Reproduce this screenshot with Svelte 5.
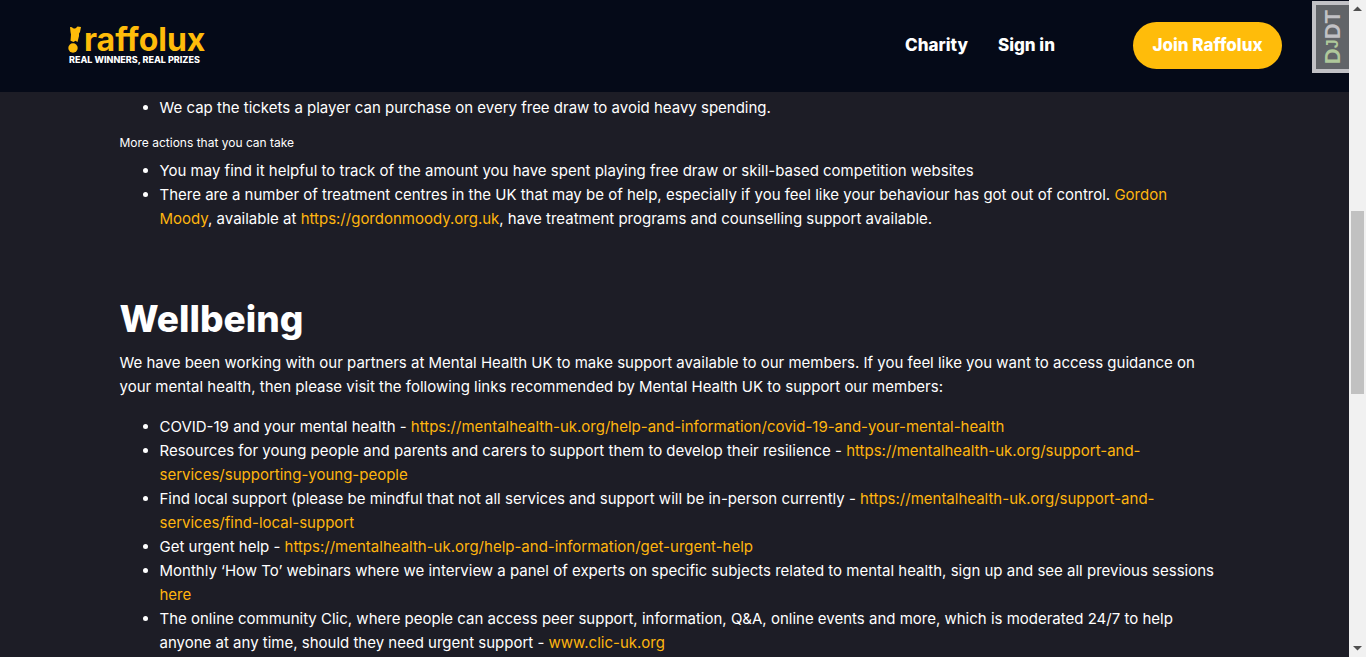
<script>
  const support = 'https://mentalhealth-uk.org/support-and-services/';
  const info = 'https://mentalhealth-uk.org/help-and-information/';
</script>

<div class="window">
  <div class="page">
    <header>
      <a class="logo" href="#home" aria-label="Raffolux, real winners, real prizes">
        <span class="wordmark">
          <svg viewBox="0 0 14 28" width="14" height="28" aria-hidden="true">
            <path d="M2 1 L4 1.300 Q5.500 3.500 8 2 L9.500 0.600 L13 1 L12 6 L11 7.500 L11 10 L9.500 16 L7.500 14.700 L5.500 16 L2.500 14.700 L3 8.500 L2.500 6 Z" />
            <circle cx="5" cy="22" r="4.700" />
          </svg>
          <span>raffolux</span>
        </span>
        <span class="tagline">REAL WINNERS, REAL PRIZES</span>
      </a>
      <nav>
        <a href="#charity">Charity</a>
        <a href="#sign-in">Sign in</a>
        <a class="join" href="#join">Join Raffolux</a>
      </nav>
    </header>

    <main>
      <ul>
        <li>We cap the tickets a player can purchase on every free draw to avoid heavy spending.</li>
      </ul>
      <h4>More actions that you can take</h4>
      <ul>
        <li>You may find it helpful to track of the amount you have spent playing free draw or skill-based competition websites</li>
        <li>There are a number of treatment centres in the UK that may be of help, especially if you feel like your behaviour has got out of control. <a href="https://gordonmoody.org.uk">Gordon<br />Moody</a>, available at <a href="https://gordonmoody.org.uk">https://gordonmoody.org.uk</a>, have treatment programs and counselling support available.</li>
      </ul>

      <h1>Wellbeing</h1>
      <p>We have been working with our partners at Mental Health UK to make support available to our members. If you feel like you want to access guidance on your mental health, then please visit the following links recommended by Mental Health UK to support our members:</p>
      <ul>
        <li>COVID-19 and your mental health - <a href="{info}covid-19-and-your-mental-health">{info}covid-19-and-your-mental-health</a></li>
        <li>Resources for young people and parents and carers to support them to develop their resilience - <a href="{support}supporting-young-people">{support}supporting-young-people</a></li>
        <li>Find local support (please be mindful that not all services and support will be in-person currently - <a href="{support}find-local-support">{support}find-local-support</a></li>
        <li>Get urgent help - <a href="{info}get-urgent-help">{info}get-urgent-help</a></li>
        <li>Monthly ‘How To’ webinars where we interview a panel of experts on specific subjects related to mental health, sign up and see all previous sessions <a href="#webinars">here</a></li>
        <li>The online community Clic, where people can access peer support, information, Q&amp;A, online events and more, which is moderated 24/7 to help<br />anyone at any time, should they need urgent support - <a href="https://www.clic-uk.org">www.clic-uk.org</a></li>
      </ul>
    </main>

    <button class="debug" type="button" aria-label="Show toolbar"><span><b>D<small>J</small></b>DT</span></button>
  </div>

  <div class="scrollbar" aria-hidden="true">
    <svg viewBox="0 0 17 17" width="17" height="17"><path d="M4 11 L8.500 6.500 L13 11 Z" /></svg>
    <div class="track"><div class="thumb"></div></div>
    <svg viewBox="0 0 17 17" width="17" height="17"><path d="M4 6 L8.500 10.500 L13 6 Z" /></svg>
  </div>
</div>

<style>
  :global(body) {
    background: #1d1d26;
  }

  .window {
    display: grid;
    grid-template-columns: minmax(0, 1fr) 17px;
    height: 100vh;
    overflow: hidden;
    color: #fff;
    background: #1d1d26;
    font: 15px/24px Inter, sans-serif;
  }

  .page {
    position: relative;
    overflow: hidden;
  }

  a {
    color: #ffb50f;
    text-decoration: none;
  }

  header {
    display: flex;
    align-items: center;
    justify-content: space-between;
    box-sizing: border-box;
    height: 92px;
    padding: 0 67px 2px 68px;
    background: #050a18;
  }

  .logo {
    display: flex;
    flex-direction: column;
    color: #ffbc0a;
  }

  .wordmark {
    display: flex;
    align-items: center;
    gap: 2px;
    height: 30px;
    font-size: 32px;
    line-height: 30px;
    font-weight: 700;
  }

  .wordmark svg {
    fill: currentColor;
  }

  .tagline {
    padding-left: 1px;
    color: #fff;
    font-size: 9px;
    line-height: 10px;
    font-weight: 800;
  }

  nav {
    display: flex;
    align-items: center;
    gap: 30px;
    font-size: 17px;
    font-weight: 800;
  }

  nav a {
    color: #fff;
  }

  .join {
    box-sizing: border-box;
    margin-left: 48px;
    min-width: 149px;
    padding: 11px 16px 12px;
    border-radius: 24px;
    background: #ffbc0a;
    text-align: center;
  }

  main {
    box-sizing: border-box;
    max-width: 1140px;
    margin: 0 auto;
    padding: 4px 15px 0;
  }

  ul {
    margin: 0 0 16px;
    padding-left: 40px;
  }

  h4 {
    margin: -1px 0 8px;
    font-size: 12px;
    line-height: 16px;
    font-weight: 400;
  }

  h1 {
    margin: 64px 0 8px;
    font-size: 37px;
    line-height: 48px;
    font-weight: 800;
  }

  p {
    margin: 0 0 16px;
  }

  .debug {
    position: absolute;
    top: 1px;
    right: 0;
    box-sizing: border-box;
    width: 37px;
    height: 72px;
    padding: 0;
    border: 4px solid #c1c1c5;
    border-right: 0;
    background: #616468;
    color: #c1c1c5;
    font: 700 22px/33px "Liberation Sans", sans-serif;
  }

  .debug span {
    display: block;
    writing-mode: vertical-rl;
    transform: rotate(180deg);
    text-align: center;
    width: 100%;
  }

  .debug b {
    color: #afc89b;
  }

  .debug small {
    font-size: 16px;
  }

  .scrollbar {
    display: flex;
    flex-direction: column;
    background: #f1f1f1;
  }

  .scrollbar svg {
    fill: #505050;
  }

  .track {
    flex: 1;
    padding: 0 2px;
  }

  .thumb {
    height: 183px;
    margin-top: 194px;
    background: #c1c1c1;
  }
</style>
